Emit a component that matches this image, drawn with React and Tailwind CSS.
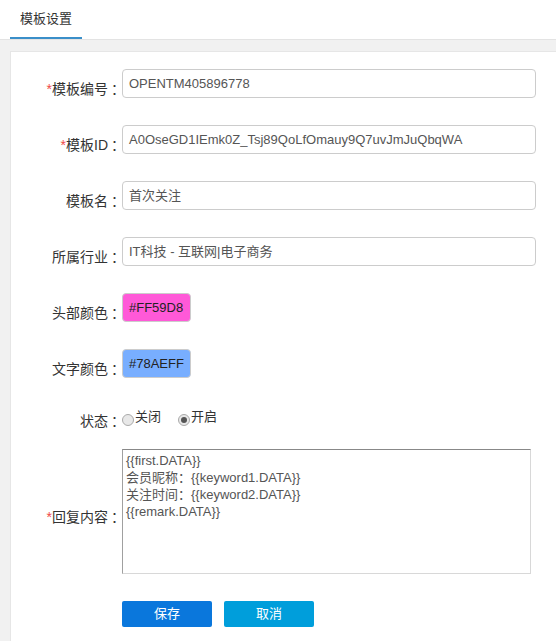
import React from 'react'

const FONT = { fontFamily: '"Liberation Sans", Arial, "Noto Sans CJK SC", sans-serif' }

// Full-width colon kept at full width, as the original font draws it
function Colon() {
  return <span className="inline-block w-[14px] pl-[3px] text-left">：</span>
}

// Label column: right-aligned, text sits a few px under the control's middle
function Label({ text, required }) {
  return (
    <div className="w-[111px] shrink-0 text-right pt-[11px] text-[14px] leading-[18px] text-[#333] whitespace-nowrap">
      {required && <span className="text-[#f04848]">*</span>}
      {text}<Colon />
    </div>
  )
}

function TextRow({ label, value, required, className = '' }) {
  return (
    <div className={`flex items-center ${className}`}>
      <Label text={label} required={required} />
      <div className="w-[414px] h-[29px] flex items-center px-[6px] border border-[#ccc] rounded-[4px] bg-white text-[13px] text-[#555] whitespace-nowrap overflow-hidden">
        {value}
      </div>
    </div>
  )
}

function ColorRow({ label, color, className = '' }) {
  return (
    <div className={`flex items-center ${className}`}>
      <Label text={label} />
      <div className="w-[69px] h-[29px] flex items-center px-[6px] border border-[#ccc] rounded-[4px] text-[13px] text-[#222]"
        style={{ backgroundColor: color }}>
        {color}
      </div>
    </div>
  )
}

function Radio({ checked, label }) {
  return (
    <div className="flex items-center">
      <span className="w-[12px] h-[12px] mt-[6px] rounded-full border border-[#aaa] bg-[#e8e8e8] flex items-center justify-center">
        {checked && <span className="w-[6px] h-[6px] rounded-full bg-[#555]" />}
      </span>
      <span className="ml-[1px] text-[13px] leading-[18px] text-[#333]">{label}</span>
    </div>
  )
}

export default function App() {
  return (
    <div className="min-h-[641px] bg-[#f1f1f1] flex flex-col" style={FONT}>
      {/* Tab header */}
      <div className="h-[40px] bg-white border-b border-[#e3e3e3] flex items-end pl-[10px]">
        <div className="w-[72px] h-[39px] flex flex-col">
          <div className="flex-1 flex items-center justify-center text-[13px] text-[#333]">模板设置</div>
          <div className="h-[2px] bg-[#3a8fc9]" />
        </div>
      </div>

      {/* Panel */}
      <div className="flex-1 mt-[11px] ml-[10px] bg-white border-l border-t border-[#e6e6e6] pt-[17px]">
        <TextRow label="模板编号" value="OPENTM405896778" required />
        <TextRow label="模板ID" value="A0OseGD1IEmk0Z_Tsj89QoLfOmauy9Q7uvJmJuQbqWA" required className="mt-[27px]" />
        <TextRow label="模板名" value="首次关注" className="mt-[27px]" />
        <TextRow label="所属行业" value="IT科技 - 互联网|电子商务" className="mt-[27px]" />
        <ColorRow label="头部颜色" color="#FF59D8" className="mt-[27px]" />
        <ColorRow label="文字颜色" color="#78AEFF" className="mt-[27px]" />

        <div className="flex items-center mt-[31px] h-[20px]">
          <div className="w-[111px] shrink-0 text-right pt-[4px] text-[14px] leading-[18px] text-[#333]">状态<Colon /></div>
          <div className="flex items-center gap-[17px] -mt-[4px]">
            <Radio label="关闭" />
            <Radio label="开启" checked />
          </div>
        </div>

        <div className="flex items-center mt-[20px]">
          <Label text="回复内容" required />
          <div className="w-[409px] h-[125px] border border-[#d8d8d8] border-t-[#888] border-l-[#a0a0a0] bg-white px-[3px] pt-[2px] text-[13px] leading-[17px] text-[#555]">
            <div>{'{{first.DATA}}'}</div>
            <div>会员昵称：{'{{keyword1.DATA}}'}</div>
            <div>关注时间：{'{{keyword2.DATA}}'}</div>
            <div>{'{{remark.DATA}}'}</div>
          </div>
        </div>

        <div className="flex gap-[12px] ml-[111px] mt-[27px] pb-[14px]">
          <button className="w-[90px] h-[26px] rounded-[2px] bg-[#0a77dc] text-white text-[13px]">保存</button>
          <button className="w-[90px] h-[26px] rounded-[2px] bg-[#009edb] text-white text-[13px]">取消</button>
        </div>
      </div>
    </div>
  )
}
